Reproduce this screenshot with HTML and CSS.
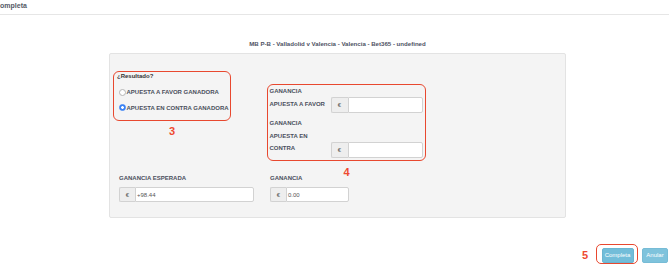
FILE: index.html
```html
<!DOCTYPE html>
<html lang="es">
<head>
<meta charset="utf-8">
<title>Completa</title>
<link rel="stylesheet" href="styles.css">
</head>
<body>
<header class="topbar"><span class="topbar-title">Completa</span></header>
<main class="modal">
  <h2 class="match">MB P-B - Valladolid v Valencia - Valencia - Bet365 - undefined</h2>
  <section class="panel">
    <div class="panel-top">
      <div class="mark mark-3">
        <div class="result-title">¿Resultado?</div>
        <label class="radio-row"><input type="radio" name="res" class="radio">APUESTA A FAVOR GANADORA</label>
        <label class="radio-row radio-row-2"><input type="radio" name="res" class="radio" checked>APUESTA EN CONTRA GANADORA</label>
        <span class="mark-num mark-num-3">3</span>
      </div>
      <div class="mark mark-4">
        <div class="gain-grid">
          <div class="field-label">GANANCIA<br>APUESTA A FAVOR</div>
          <div class="input-group"><span class="addon">€</span><span class="input"></span></div>
          <div class="field-label">GANANCIA<br>APUESTA EN<br>CONTRA</div>
          <div class="input-group"><span class="addon">€</span><span class="input"></span></div>
        </div>
        <span class="mark-num mark-num-4">4</span>
      </div>
    </div>
    <div class="panel-bottom">
      <div class="field field-wide">
        <div class="bottom-label">GANANCIA ESPERADA</div>
        <div class="input-group input-group-sm"><span class="addon">€</span><span class="input">+98.44</span></div>
      </div>
      <div class="field field-narrow">
        <div class="bottom-label">GANANCIA</div>
        <div class="input-group input-group-sm"><span class="addon">€</span><span class="input">0.00</span></div>
      </div>
    </div>
  </section>
</main>
<footer class="actions">
  <span class="step">5</span>
  <div class="mark mark-5"><button class="btn btn-complete">Completa</button></div>
  <button class="btn btn-cancel">Anular</button>
</footer>
</body>
</html>
```

FILE: styles.css
```css
* { box-sizing: border-box; }

html, body {
  margin: 0;
  padding: 0;
  background: #ffffff;
  width: 669px;
  height: 272px;
  overflow: hidden;
  font-family: "Liberation Sans", Arial, sans-serif;
  color: #4b4f5c;
}

.topbar {
  height: 15px;
  border-bottom: 1px solid #e6e6e6;
  overflow: hidden;
}

.topbar-title {
  display: block;
  margin-left: -5px;
  padding-top: 1px;
  font-size: 7px;
  line-height: 10px;
  font-weight: bold;
  color: #555a66;
}

.modal {
  width: 457px;
  margin-left: 109px;
}

.match {
  margin: 24px 0 4px;
  font-size: 6.1px;
  line-height: 10px;
  font-weight: bold;
  text-align: center;
  color: #4e5263;
}

.panel {
  height: 165px;
  background: #f4f4f4;
  border: 1px solid #e3e3e3;
  border-radius: 2px;
  padding: 17px 0 15px 3px;
}

.panel-top {
  display: flex;
  align-items: flex-start;
}

.mark {
  position: relative;
  border: 1.5px solid #e8482f;
  border-radius: 6px;
}

.mark-num {
  position: absolute;
  left: 0;
  right: 0;
  text-align: center;
  font-size: 11px;
  line-height: 11px;
  font-weight: bold;
  color: #ee4a31;
}

.mark-num-3 { top: calc(100% + 5.8px); }
.mark-num-4 { top: calc(100% + 6.5px); }

.mark-3 {
  width: 118px;
  padding: 0 3px 7.5px 3px;
}

.result-title {
  padding-top: 1px;
  font-size: 6px;
  line-height: 7px;
  font-weight: bold;
  color: #333333;
}

.radio-row {
  display: flex;
  align-items: center;
  height: 10px;
  margin-top: 7px;
  margin-left: -1px;
  font-size: 6px;
  font-weight: bold;
  color: #4b4f5c;
  white-space: nowrap;
}

.radio-row-2 { margin-top: 5.5px; }

.radio {
  appearance: none;
  -webkit-appearance: none;
  width: 7px;
  height: 7px;
  margin: 0 1px 0 2.5px;
  border: 1px solid #b5b5b5;
  border-radius: 50%;
  background: #ffffff;
  flex: none;
}

.radio:checked {
  border-color: #3a82f5;
  background: radial-gradient(circle, #ffffff 0 1.1px, #3a82f5 1.6px);
}

.mark-4 {
  width: 159px;
  margin: 13px 0 0 36px;
  padding: 0 1.5px 2.5px 1.5px;
}

.gain-grid {
  display: grid;
  grid-template-columns: 61px 92px;
  row-gap: 4px;
  align-items: end;
}

.field-label {
  font-size: 6px;
  line-height: 12.5px;
  font-weight: bold;
  color: #4b4f5c;
  padding-bottom: 3px;
  white-space: nowrap;
}

.input-group {
  display: flex;
  height: 16px;
}

.input-group-sm { height: 15px; }

.addon {
  width: 17px;
  flex: none;
  display: flex;
  align-items: center;
  justify-content: center;
  background: #eeeeee;
  border: 1px solid #d2d2d2;
  border-right: 0;
  border-radius: 2px 0 0 2px;
  font-size: 6px;
  color: #555555;
}

.input {
  flex: 1;
  display: flex;
  align-items: center;
  padding-left: 1px;
  background: #ffffff;
  border: 1px solid #d2d2d2;
  border-radius: 0 2px 2px 0;
  font-size: 6px;
  color: #555555;
}

.panel-bottom {
  display: flex;
  gap: 16px;
  margin: 13px 0 0 6px;
}

.field-wide { width: 135px; }
.field-narrow { width: 79px; }

.field-narrow .addon { width: 16px; }
.field-wide .addon { width: 16px; }

.bottom-label {
  font-size: 6px;
  line-height: 8px;
  font-weight: bold;
  color: #4b4f5c;
  margin-bottom: 5px;
  white-space: nowrap;
}

.actions {
  display: flex;
  justify-content: flex-end;
  align-items: center;
  margin-top: 26px;
  padding-right: 1px;
}

.step {
  margin: 3px 8px 0 0;
  font-size: 11px;
  line-height: 11px;
  font-weight: bold;
  color: #ee4a31;
}

.mark-5 {
  border-radius: 5px;
  padding: 2.5px 3px 0.5px 4.5px;
}

.btn {
  display: block;
  height: 15px;
  padding: 0;
  border: 1px solid #6bb5d0;
  border-radius: 2px;
  background: #72bdd9;
  color: #ffffff;
  font-family: "Liberation Sans", Arial, sans-serif;
  font-size: 6px;
  line-height: 13px;
  text-align: center;
}

.btn-complete { width: 32px; }

.btn-cancel {
  width: 26px;
  margin: 2px 0 0 4.5px;
  background: #7fc3dc;
  border-color: #77bcd6;
}
```
